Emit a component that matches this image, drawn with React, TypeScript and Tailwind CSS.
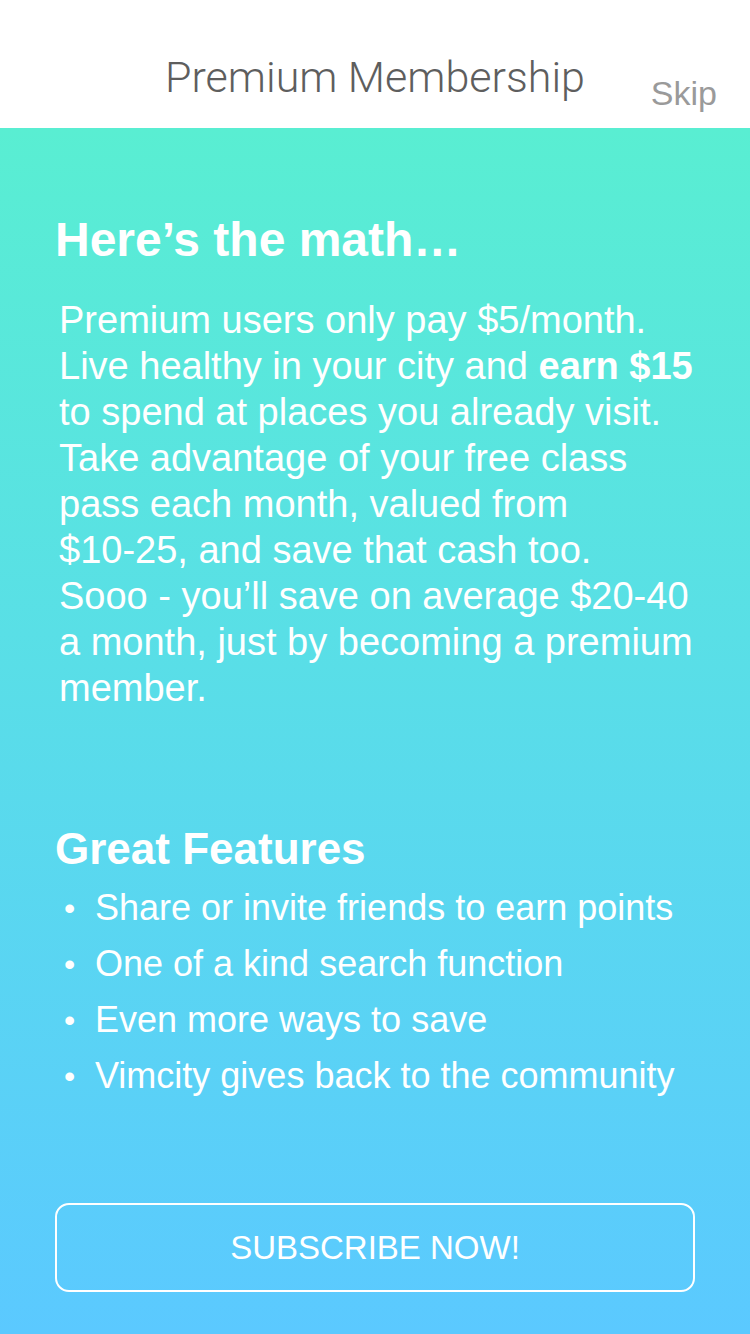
import React from 'react';

const features = [
  'Share or invite friends to earn points',
  'One of a kind search function',
  'Even more ways to save',
  'Vimcity gives back to the community',
];

export default function App() {
  return (
    <div className="flex h-[1334px] w-[750px] flex-col overflow-hidden font-['Liberation_Sans',Arial,sans-serif]">
      <header className="relative flex h-[128px] shrink-0 items-end justify-center bg-white pb-[29px]">
        <h1 className="font-['Roboto','Liberation_Sans',sans-serif] text-[43px] font-light leading-none text-[#5e5e5e]">
          Premium Membership
        </h1>
        <button className="absolute right-[33px] bottom-[18px] text-[34px] leading-none text-[#9a9a9a]">
          Skip
        </button>
      </header>

      <main className="flex flex-1 flex-col bg-gradient-to-b from-[#59eed2] to-[#5bc9ff] px-[55px] text-white">
        <h2 className="mt-[88px] text-[48px] font-bold leading-none">Here’s the math…</h2>
        <p className="mt-[33px] pl-[4px] text-[38px] leading-[46px] whitespace-nowrap">
          Premium users only pay $5/month.
          <br />
          Live healthy in your city and <b>earn $15</b>
          <br />
          to spend at places you already visit.
          <br />
          Take advantage of your free class
          <br />
          pass each month, valued from
          <br />
          $10-25, and save that cash too.
          <br />
          Sooo - you’ll save on average $20-40
          <br />
          a month, just by becoming a premium
          <br />
          member.
        </p>

        <h2 className="mt-[116px] text-[44px] font-bold leading-none">Great Features</h2>
        <ul className="mt-[9px] flex flex-col">
          {features.map((f) => (
            <li key={f} className="flex h-[56px] items-center text-[36px] leading-[36px] whitespace-nowrap">
              <span className="w-[40px] pl-[9px] text-[32px]">•</span>
              <span>{f}</span>
            </li>
          ))}
        </ul>

        <button className="mt-auto mb-[42px] h-[89px] w-[640px] rounded-[14px] border-2 border-white text-[33px]">
          SUBSCRIBE NOW!
        </button>
      </main>
    </div>
  );
}
